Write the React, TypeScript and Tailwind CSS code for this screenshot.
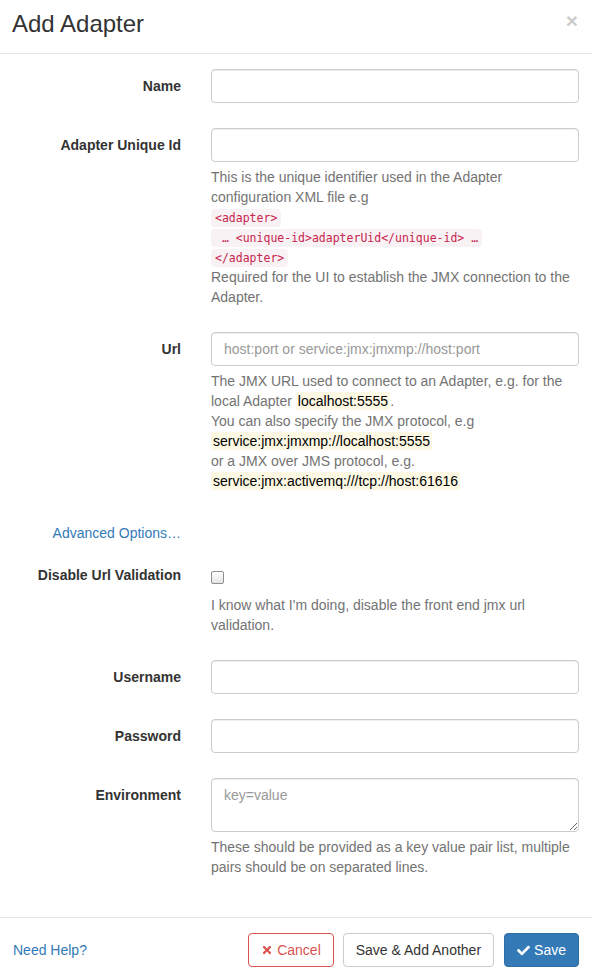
import React from "react";
import { FaTimes, FaCheck } from "react-icons/fa";

const inputCls =
  "block w-[368px] h-[34px] px-[12px] py-[6px] text-[14px] leading-[20px] text-[#555] bg-white border border-[#ccc] rounded-[4px] shadow-[inset_0_1px_1px_rgba(0,0,0,0.075)] placeholder:text-[#999] outline-none";

function Label({ children }: { children: React.ReactNode }) {
  return (
    <div className="w-[181px] shrink-0 text-right font-bold pt-[7px] text-[#333]">{children}</div>
  );
}

function Row({ label, children, mb = "mb-[25px]" }: { label: React.ReactNode; children: React.ReactNode; mb?: string }) {
  return (
    <div className={`flex ${mb}`}>
      <Label>{label}</Label>
      <div className="ml-[30px] w-[368px]">{children}</div>
    </div>
  );
}

function Code({ children }: { children: React.ReactNode }) {
  return (
    <code
      className="text-[#c7254e] bg-[#f9f2f4] rounded-[4px] px-[4px] py-[2px] text-[11.5px] leading-none whitespace-pre"
      style={{ fontFamily: '"DejaVu Sans Mono", "Liberation Mono", monospace' }}
    >
      {children}
    </code>
  );
}

function Mark({ children }: { children: React.ReactNode }) {
  return <span className="bg-[#fcf8e3] text-black px-[2px] py-[1px]">{children}</span>;
}

function Help({ children }: { children: React.ReactNode }) {
  return <div className="mt-[5px] text-[#737373]">{children}</div>;
}

export default function App() {
  return (
    <div
      className="w-[592px] bg-white text-[14px] leading-[20px] text-[#333]"
      style={{ fontFamily: '"Liberation Sans", Arial, Helvetica, sans-serif' }}
    >
      {/* Header */}
      <div className="h-[54px] border-b border-[#e5e5e5] flex items-start justify-between pl-[12px] pr-[14px]">
        <h4 className="text-[24px] leading-[26px] pt-[11px] text-[#333] font-normal">Add Adapter</h4>
        <span className="text-[21px] font-bold leading-none text-black opacity-20 mt-[10px]">×</span>
      </div>

      {/* Body */}
      <div className="pt-[15px] pb-[15px]">
        <Row label="Name">
          <input className={inputCls} />
        </Row>

        <Row label="Adapter Unique Id">
          <input className={inputCls} />
          <Help>
            This is the unique identifier used in the Adapter configuration XML file e.g
            <br />
            <Code>{"<adapter>"}</Code>
            <br />
            <Code>{" … <unique-id>adapterUid</unique-id> …"}</Code>
            <br />
            <Code>{"</adapter>"}</Code>
            <br />
            Required for the UI to establish the JMX connection to the Adapter.
          </Help>
        </Row>

        <Row label="Url">
          <input className={inputCls} placeholder="host:port or service:jmx:jmxmp://host:port" />
          <Help>
            The JMX URL used to connect to an Adapter, e.g. for the local Adapter <Mark>localhost:5555</Mark>.
            <br />
            You can also specify the JMX protocol, e.g
            <br />
            <Mark>service:jmx:jmxmp://localhost:5555</Mark>
            <br />
            or a JMX over JMS protocol, e.g.
            <br />
            <Mark>service:jmx:activemq:///tcp://host:61616</Mark>
          </Help>
        </Row>

        <div className="flex mb-[15px]">
          <div className="w-[181px] shrink-0 text-right pt-[7px]">
            <span className="text-[#337ab7]">Advanced Options…</span>
          </div>
        </div>

        <Row label="Disable Url Validation">
          <div className="h-[32px] pt-[13px]">
            <span className="block w-[13px] h-[13px] rounded-[2px] border border-[#8f8f8f] bg-gradient-to-b from-[#fdfdfd] to-[#e6e6e6]" />
          </div>
          <Help>I know what I'm doing, disable the front end jmx url validation.</Help>
        </Row>

        <Row label="Username">
          <input className={inputCls} />
        </Row>

        <Row label="Password">
          <input className={inputCls} type="password" />
        </Row>

        <Row label="Environment">
          <textarea
            rows={2}
            className="block w-[368px] h-[54px] px-[12px] py-[6px] text-[14px] leading-[20px] text-[#555] bg-white border border-[#ccc] rounded-[4px] shadow-[inset_0_1px_1px_rgba(0,0,0,0.075)] placeholder:text-[#999] outline-none resize-y"
            placeholder="key=value"
          />
          <Help>These should be provided as a key value pair list, multiple pairs should be on separated lines.</Help>
        </Row>
      </div>

      {/* Footer */}
      <div className="border-t border-[#e5e5e5] pt-[15px] pb-[15px] pl-[13px] pr-[13px] flex items-center justify-between">
        <span className="text-[#337ab7]">Need Help?</span>
        <div className="flex items-center">
          <button className="h-[34px] px-[12px] border border-[#d9534f] rounded-[4px] bg-white text-[#d9534f] flex items-center gap-[4px]">
            <FaTimes size={12} />
            <span>Cancel</span>
          </button>
          <button className="ml-[9px] h-[34px] px-[12px] border border-[#ccc] rounded-[4px] bg-white text-[#333]">
            Save &amp; Add Another
          </button>
          <button className="ml-[10px] h-[34px] px-[12px] border border-[#2e6da4] rounded-[4px] bg-[#337ab7] text-white flex items-center gap-[4px]">
            <FaCheck size={13} />
            <span>Save</span>
          </button>
        </div>
      </div>
    </div>
  );
}
